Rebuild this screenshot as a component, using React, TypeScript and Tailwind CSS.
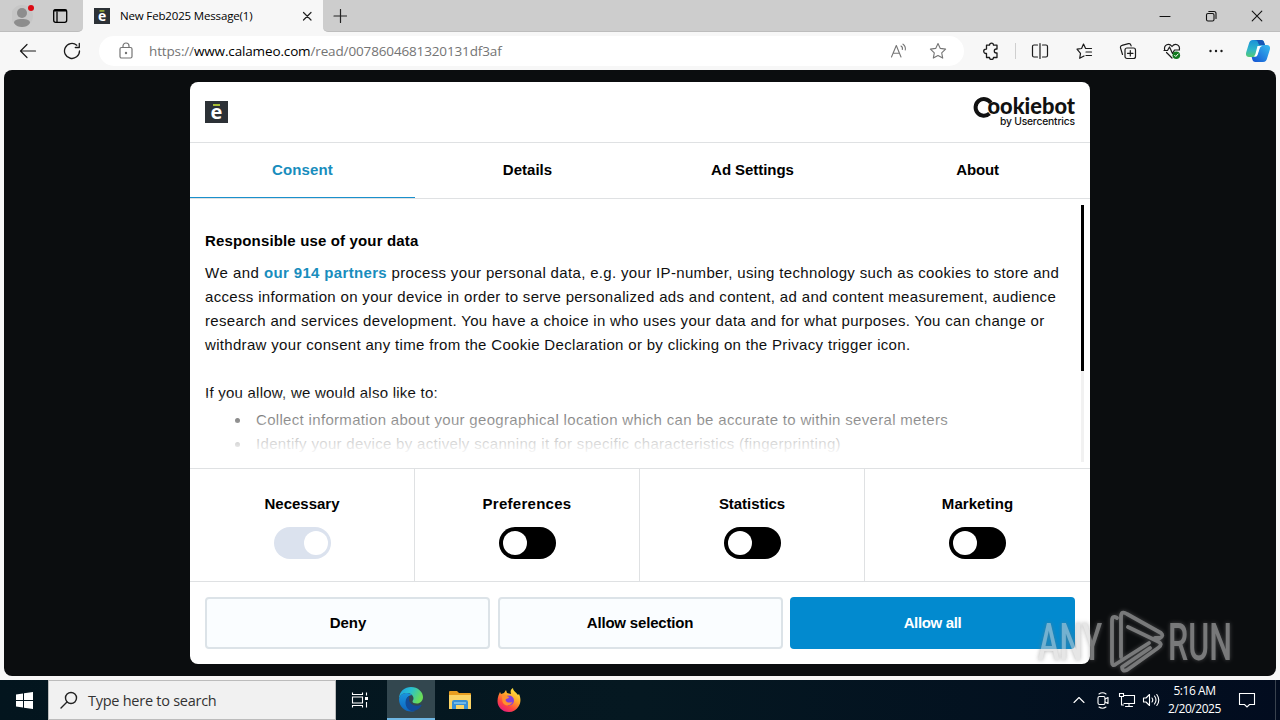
import type { ReactNode } from 'react'

const UI = "font-['Open_Sans','Noto_Sans',sans-serif]"

function Svg({ w, h, className = '', sw = 1.1, children }: { w: number; h: number; className?: string; sw?: number; children: ReactNode }) {
  return (
    <svg
      width={w}
      height={h}
      viewBox={`0 0 ${w} ${h}`}
      fill="none"
      stroke="currentColor"
      strokeWidth={sw}
      strokeLinecap="round"
      strokeLinejoin="round"
      className={`shrink-0 ${className}`}
    >
      {children}
    </svg>
  )
}

function CalameoMark({ w, h, className = '' }: { w: number; h: number; className?: string }) {
  return (
    <svg width={w} height={h} viewBox="0 0 23 22" preserveAspectRatio="none" className={`shrink-0 overflow-visible ${className}`}>
      <rect width="23" height="22" fill="#2c3136" />
      <rect x="8" y="3" width="7" height="2" fill="#a9bd35" />
      <text x="11.5" y="18.3" textAnchor="middle" fontSize="20" fontWeight="700" fontFamily="Open Sans" fill="#fff">
        e
      </text>
    </svg>
  )
}

function TabStrip() {
  return (
    <div className="flex h-8 shrink-0 bg-[#f7f7f7]">
      <div className="flex w-[83px] items-start rounded-br-[5px] border-b border-[#bdbdbd] bg-[#cdcdcd] pl-3">
        <Svg w={24} h={30} className="text-[#8d8d8d]">
          <circle cx="10" cy="16" r="11" fill="#c6c6c6" stroke="none" />
          <circle cx="10" cy="13" r="5" fill="#8d8d8d" stroke="none" />
          <path d="M2 23c0-3 3-4 8-4s8 1 8 4c-2 3-5 4-8 4s-6-1-8-4z" fill="#8d8d8d" stroke="none" />
          <circle cx="19" cy="8" r="3" fill="#dc0a14" stroke="none" />
        </Svg>
        <Svg w={16} h={30} className="ml-4 text-black" sw={1.3}>
          <rect x="1.7" y="9.7" width="13" height="12.6" rx="2" />
          <path d="M5 12v10" />
          <path d="M2.500 10.600h11.500" strokeWidth="2" />
        </Svg>
      </div>
      <div className="flex w-[240px] items-center pl-[11px] pr-[9px]">
        <CalameoMark w={16} h={16} />
        <span className={`${UI} ml-2.5 flex-1 whitespace-nowrap text-[11.5px] tracking-[-0.16px] text-black`}>New Feb2025 Message(1)</span>
        <Svg w={14} h={14} className="text-[#222]" sw={1.2}>
          <path d="M3.500 3.500l7.500 7.500M11 3.500l-7.500 7.500" />
        </Svg>
      </div>
      <div className="flex flex-1 items-center rounded-bl-[5px] border-b border-[#bdbdbd] bg-[#cdcdcd] pl-2.5">
        <Svg w={14} h={14} className="text-[#222]" sw={1.2}>
          <path d="M7.500 .5v13M1 7h13" />
        </Svg>
        <div className="ml-auto flex text-[#111]">
          <div className="flex w-[46px] justify-center">
            <Svg w={12} h={12}>
              <path d="M1 6.500h10" />
            </Svg>
          </div>
          <div className="flex w-[46px] justify-center">
            <Svg w={12} h={12}>
              <rect x="1.500" y="3.500" width="7.500" height="7.500" rx="1.500" />
              <path d="M3.800 1.500h5.200a2 2 0 0 1 2 2v5" />
            </Svg>
          </div>
          <div className="flex w-[46px] justify-center">
            <Svg w={12} h={12}>
              <path d="M1.200 1.200l9.600 9.600M10.800 1.200l-9.600 9.600" />
            </Svg>
          </div>
        </div>
      </div>
    </div>
  )
}

const starPath = 'M9 1.500l2.300 4.900 5.300.7-3.900 3.700 1 5.300L9 13.500l-4.700 2.600 1-5.300L1.400 7.100l5.300-.7z'

function Toolbar() {
  return (
    <div className="flex h-[38px] shrink-0 items-center bg-[#f7f7f7] pl-[19px] text-[#1b1b1b]">
      <Svg w={18} h={18} sw={1.2}>
        <path d="M16.500 9H1.500M8 2.500L1.500 9 8 15.500" />
      </Svg>
      <Svg w={18} h={18} className="ml-[26px]" sw={1.3}>
        <path d="M16.500 9A7.500 7.500 0 1 1 13.800 3.200M16.300 1.500v4h-4" />
      </Svg>
      <div className="ml-[18px] flex h-[30px] w-[865px] items-center rounded-full bg-white pl-[19px] pr-[17px] text-[#757575]">
        <Svg w={16} h={18} sw={1.2}>
          <rect x="2" y="5.500" width="12" height="10.500" rx="1.500" />
          <path d="M5 5.500V4a3 3 0 0 1 6 0v1.500" />
          <circle cx="8" cy="11" r=".6" fill="currentColor" />
        </Svg>
        <span className={`${UI} ml-[15px] flex-1 whitespace-nowrap pt-px text-[13.5px] tracking-[-0.14px] text-[#747474]`}>
          https://<span className="text-black">www.calameo.com</span>/read/0078604681320131df3af
        </span>
        <Svg w={18} h={18}>
          <path d="M1.500 15L6.300 3.500 11 15M3 11.200h6.500" />
          <path d="M11 4a3 3 0 0 1 1.300 3.500M13 2.200a6 6 0 0 1 2.300 5.800" />
        </Svg>
        <Svg w={18} h={18} className="ml-[21px]">
          <path d={starPath} />
        </Svg>
      </div>
      <Svg w={18} h={18} className="ml-[18px]" sw={1.3}>
        <path d="M4.500 3.200h3a2 2 0 0 1 4 0H15v3.800h-.7a2 2 0 0 0 0 4h.7v4.500h-3.500a2 2 0 0 1-4 0h-3V11.500h-.6a2.200 2.200 0 1 1 0-4.400h.6z" />
      </Svg>
      <div className="ml-[15px] h-4 w-px bg-[#cfcfcf]" />
      <Svg w={18} h={18} className="ml-[15px]" sw={1.2}>
        <path d="M6.500 3H3a1.500 1.500 0 0 0-1.500 1.500v9A1.500 1.500 0 0 0 3 15h3.500M11.500 3H15a1.500 1.500 0 0 1 1.500 1.500v9A1.500 1.500 0 0 1 15 15h-3.500M9 1.500v15" />
      </Svg>
      <Svg w={18} h={18} className="ml-[26px]" sw={1.2}>
        <path d="M9 14l-4.300 2.300.8-5L2 7.200l4.600-.7L8.500 2l2.100 4.500h5.900M11 10h5.500M11 13.500h5.500" />
      </Svg>
      <Svg w={18} h={18} className="ml-[26px]" sw={1.2}>
        <rect x="6" y="6" width="10.500" height="10.500" rx="2" />
        <path d="M11.300 8.500v5.500M8.500 11.300H14M3.500 12.500L1.500 5.800A2 2 0 0 1 3 3.400l6.500-1.700a2 2 0 0 1 2.400 1.400l.2.700" />
      </Svg>
      <Svg w={18} h={18} className="ml-[26px]" sw={1.2}>
        <path d="M1.700 8C.5 2.500 6 .5 9 4.500 12 .5 17.500 2.500 16.300 8M1 8.500h3.500L6.500 5l3 6.500 2-3.500h5M3.500 10.500L9 16" />
        <circle cx="13.300" cy="13.200" r="3.800" fill="#12791f" stroke="none" />
        <path d="M11.600 13.300l1.200 1.200 2.300-2.500" stroke="#fff" strokeWidth="1" />
      </Svg>
      <Svg w={18} h={18} className="ml-[26px]">
        <circle cx="3.500" cy="9" r="1.200" fill="currentColor" stroke="none" />
        <circle cx="9" cy="9" r="1.200" fill="currentColor" stroke="none" />
        <circle cx="14.500" cy="9" r="1.200" fill="currentColor" stroke="none" />
      </Svg>
      <svg width="24" height="24" viewBox="0 0 24 24" className="ml-[21px] shrink-0">
        <defs>
          <linearGradient id="cpA" x1="0" y1="0" x2="0" y2="1">
            <stop offset="0" stopColor="#1b91d8" />
            <stop offset=".55" stopColor="#2fb5ca" />
            <stop offset="1" stopColor="#55ca75" />
          </linearGradient>
          <linearGradient id="cpB" x1="1" y1="0" x2="0" y2="1">
            <stop offset="0" stopColor="#35bdf0" />
            <stop offset="1" stopColor="#1450d2" />
          </linearGradient>
        </defs>
        <path d="M7 1h8c2 0 2.800 1 3.300 3L19 6h-2c-2 0-3 1-3.600 3l-2 6c-.7 2-1.500 3-3.400 3H3c-3 0-3.500-2.500-2.700-5l2.500-8C3.500 2.500 4.500 1 7 1z" fill="url(#cpA)" />
        <path d="M8 1h7c2 0 2.800 1 3.300 3L19 6h-4c-2 0-2.500-1-3-2.600C11.500 1.800 10 1 8 1z" fill="#1656b5" />
        <path d="M17 23H9.500c-2 0-2.800-1-3.300-3L5.700 18H8c2 0 2.800-1 3.400-3l2-6c.7-2 1.600-3 3.600-3h4c3 0 3.500 2.500 2.700 5l-2.500 8c-.7 2.500-1.700 4-4.200 4z" fill="url(#cpB)" />
        <path d="M11.500 7h4.500c-1.300.5-1.900 1.300-2.400 2.800l-1.800 5.400c-.4 1.200-.9 1.800-1.700 2.300H7.500c1-.5 1.500-1.400 2-2.800z" fill="#fff" />
      </svg>
    </div>
  )
}

function Toggle({ locked = false }: { locked?: boolean }) {
  return (
    <div className={`flex h-8 w-[57px] items-center rounded-full px-1 ${locked ? 'justify-end bg-[#dbe2ee] pr-[3px]' : 'bg-black'}`}>
      <div className="size-6 rounded-full bg-white" />
    </div>
  )
}

const tabs = [
  { label: 'Consent', spacing: 'tracking-[0.15px]' },
  { label: 'Details', spacing: 'tracking-[0.02px]' },
  { label: 'Ad Settings', spacing: 'tracking-[-0.05px]' },
  { label: 'About', spacing: 'tracking-[-0.15px]' },
]

const categories = [
  { label: 'Necessary', spacing: 'tracking-normal' },
  { label: 'Preferences', spacing: 'tracking-[0.28px]' },
  { label: 'Statistics', spacing: 'tracking-[-0.05px]' },
  { label: 'Marketing', spacing: 'tracking-[0.05px]' },
]

const purposes = [
  'Collect information about your geographical location which can be accurate to within several meters',
  'Identify your device by actively scanning it for specific characteristics (fingerprinting)',
]

function ConsentDialog() {
  return (
    <div className="flex h-[582px] w-[900px] flex-col overflow-hidden rounded-lg bg-white font-['Liberation_Sans',Arial,sans-serif] text-[15px] text-[#101010]">
      <div className="flex h-[61px] shrink-0 items-center justify-between border-b border-[#dfe1e3] px-[15px]">
        <CalameoMark w={23} h={22} />
        <svg width="104" height="36" viewBox="0 0 104 36" className="-mr-0.5 overflow-visible">
          <path d="M17.800 8.800A8.300 8.300 0 1 0 16.500 19.500" fill="none" stroke="#111" strokeWidth="4" />
          <text x="14.500" y="20.300" fontFamily="Lato" fontWeight="900" fontSize="22.500" textLength="87.500" lengthAdjust="spacingAndGlyphs" fill="#111">
            ookiebot
          </text>
          <text x="27" y="31.300" fontFamily="Inter" fontWeight="500" fontSize="10.300" textLength="75" fill="#111">
            by Usercentrics
          </text>
        </svg>
      </div>

      <div className="grid h-[56px] shrink-0 grid-cols-4 border-b border-[#dfe1e3] font-bold text-black">
        {tabs.map((tab, i) => (
          <div key={tab.label} className={`flex flex-col ${tab.spacing} ${i === 0 ? 'text-[#188dbd]' : ''}`}>
            <span className="flex flex-1 items-center justify-center">{tab.label}</span>
            <span className={`h-px ${i === 0 ? 'bg-[#1a90cc]' : ''}`} />
          </div>
        ))}
      </div>

      <div className="relative flex h-[269px] shrink-0 justify-between pl-[15px]">
        <div className="whitespace-nowrap pt-[30px] leading-6">
          <h2 className="mb-2 font-bold tracking-[0.15px] text-black">Responsible use of your data</h2>
          <p className="tracking-[0.335px]">
            <span className="tracking-[0.5px]">We and </span>
            <strong className="text-[#188dbd]">our 914 partners</strong> process your personal data, e.g. your IP-number, using technology such as cookies to store and
          </p>
          <p className="tracking-[0.33px]">access information on your device in order to serve personalized ads and content, ad and content measurement, audience</p>
          <p className="tracking-[0.325px]">research and services development. You have a choice in who uses your data and for what purposes. You can change or</p>
          <p className="tracking-[0.32px]">withdraw your consent any time from the Cookie Declaration or by clicking on the Privacy trigger icon.</p>
          <p className="mt-6 tracking-[0.24px]">If you allow, we would also like to:</p>
          <ul className="mt-[3px] pl-[30px] tracking-[0.32px]">
            {purposes.map((text) => (
              <li key={text} className="flex items-center gap-4">
                <span className="size-[5px] rounded-full bg-[#101010]" />
                {text}
              </li>
            ))}
          </ul>
        </div>
        <div className="absolute bottom-0 left-0 h-[72px] w-[880px] bg-linear-to-t from-white from-18% to-white/20" />
        <div className="mr-1.5 mt-1.5 h-[257px] w-[3px] bg-[#f1f1f1]">
          <div className="h-[166px] bg-black" />
        </div>
      </div>

      <div className="grid h-[114px] shrink-0 grid-cols-4 border-y border-[#dfe1e3]">
        {categories.map((cat, i) => (
          <div key={cat.label} className={`flex flex-col items-center pt-[23px] ${i < 3 ? 'border-r border-[#dfe1e3]' : ''}`}>
            <span className={`mb-[11px] font-bold leading-6 text-black ${cat.spacing}`}>{cat.label}</span>
            <Toggle locked={i === 0} />
          </div>
        ))}
      </div>

      <div className="flex flex-1 justify-between px-[15px] pb-[15px] pt-[15px] font-bold text-black">
        <button className="w-[285px] rounded border-2 border-[#dce3e8] bg-[#fafdff] pl-px">Deny</button>
        <button className="w-[285px] rounded border-2 border-[#dce3e8] bg-[#fafdff] tracking-[-0.18px]">Allow selection</button>
        <button className="w-[285px] rounded bg-[#028acf] tracking-[-0.35px] text-white">Allow all</button>
      </div>
    </div>
  )
}

function Watermark() {
  return (
    <svg width="210" height="70" viewBox="0 0 210 70" className="absolute left-[1030px] top-[606px] overflow-visible opacity-55 drop-shadow-[0_0_2px_#777]">
      <g fill="#d2d2d2" fontFamily="Roboto" fontSize="52" fontWeight="500">
        <text x="8" y="53.500" textLength="64" lengthAdjust="spacingAndGlyphs">
          ANY
        </text>
        <text x="138" y="53.500" textLength="64" lengthAdjust="spacingAndGlyphs">
          RUN
        </text>
      </g>
      <g fill="none" stroke="#d2d2d2" strokeWidth="3.800" strokeLinejoin="round" strokeLinecap="round">
        <path d="M87 12q-5-3-5 3V56q0 5 4 2L119 37" />
        <path d="M91 51V11q0-7 6-3l34 19q3 3-1 5l-5 0" />
        <path d="M98 21l29 14q7 3 1 7L97 64q-5 2-5-3l28-19" />
      </g>
    </svg>
  )
}

function Taskbar() {
  return (
    <div className="flex h-10 shrink-0 items-center bg-linear-to-r from-[#03151e] via-[#051821] to-[#020c1f] text-white">
      <div className="flex w-12 justify-center">
        <svg width="17" height="17" viewBox="0 0 17 17" fill="#fff">
          <path d="M0 2.400L7 1.400V8H0zM8 1.300L17 0v8H8zM0 9h7v6.600L0 14.600zM8 9h9v8l-9-1.300z" />
        </svg>
      </div>
      <div className="flex h-10 w-72 items-center border border-[#bcbcbc] bg-[#f1f1f1] pl-[11px] text-[#222]">
        <Svg w={18} h={18} sw={1.4}>
          <circle cx="11" cy="7" r="5.500" />
          <path d="M7 11l-6 6" />
        </Svg>
        <span className={`${UI} ml-2.5 whitespace-nowrap pt-0.5 text-[14.500px] tracking-[-0.26px] text-[#333]`}>Type here to search</span>
      </div>
      <div className="flex w-[51px] justify-center pr-1">
        <Svg w={18} h={18}>
          <path d="M1.500 1.500v2h10v-2M1.500 16.500v-2h10v2M1.500 6h10v6h-10zM15.500 1.500v3M15.500 11v5.500" strokeLinejoin="miter" strokeLinecap="butt" />
          <rect x="14" y="6" width="3" height="3" fill="#fff" stroke="none" />
        </Svg>
      </div>
      <div className="flex h-10 w-12 items-center justify-center border-b-2 border-[#6fb7e3] bg-[#33474f]">
        <svg width="24" height="25" viewBox="0 0 24 25">
          <defs>
            <linearGradient id="edA" x1="0" y1="0" x2="1" y2=".4">
              <stop offset="0" stopColor="#1d9de5" />
              <stop offset=".5" stopColor="#29c0cf" />
              <stop offset="1" stopColor="#69dc58" />
            </linearGradient>
            <linearGradient id="edB" x1="0" y1="0" x2="0" y2="1">
              <stop offset="0" stopColor="#1a95dd" />
              <stop offset="1" stopColor="#0d65c0" />
            </linearGradient>
          </defs>
          <path d="M0 12C0 4 6 0 12 0c7 0 12 5 12 10 0 4-3 6.500-6 6.500s-4.500-1-4.500-2 1-1.500 1-3C14.500 8 11 6 8 6c-4 0-7 2-8 6z" fill="url(#edA)" />
          <path d="M0 12c1-4 4-6 8-6 2 0 4 1 5 2-3 0-6 3-6 7 0 5 4 9 9 9-8 2.500-16-3-16-12z" fill="url(#edB)" />
          <path d="M10 9c-2 1-3.500 3.500-3.500 6.500C6.500 21 11 25 15 24c4-1 6-3 7.500-5.500.3-.7-.2-1-.7-.7C16 20.500 10 17 10 12z" fill="#124b99" />
        </svg>
      </div>
      <div className="flex w-[49px] justify-center">
        <svg width="22" height="20" viewBox="0 0 22 20">
          <path d="M0 2q0-1 1-1h7l2 2h11q1 0 1 1v4H0z" fill="#e89e20" />
          <path d="M0 5h22v14H0z" fill="#fbd466" />
          <path d="M3 19v-7q0-2 2-2h12q2 0 2 2v7h-4v-4H7v4z" fill="#3990d5" />
          <path d="M5 12h12v2H5z" fill="#70b9e9" />
        </svg>
      </div>
      <div className="flex w-[49px] justify-center">
        <svg width="24" height="24" viewBox="0 0 24 24">
          <defs>
            <linearGradient id="ffA" x1=".8" y1="0" x2=".2" y2="1">
              <stop offset="0" stopColor="#fff044" />
              <stop offset=".4" stopColor="#ffa329" />
              <stop offset=".7" stopColor="#ff483d" />
              <stop offset="1" stopColor="#e31587" />
            </linearGradient>
          </defs>
          <path d="M3 4l1 2 3-1 2-3 1 3 4 1c-1-3 0-5 2-6 0 3 3 4 5 7l1-1c2 4 2 9-.5 12.500C19.500 22 16 24 12 24 5 24 .5 19 .5 13 .5 9 2 6 3 4z" fill="url(#ffA)" />
          <circle cx="12" cy="12.500" r="5" fill="#8340dc" />
          <path d="M5 8c3-2 5 0 7 1 0 2-3 1-3.500 3 1 3 4 3 7 2-2 4-8 5-10 0z" fill="#ff912d" />
        </svg>
      </div>

      <div className="ml-auto flex h-full items-center">
        <Svg w={18} h={18} className="mr-1.5">
          <path d="M4 11.500L9 6.500l5 5" />
        </Svg>
        <Svg w={18} h={18} className="mr-1.5">
          <rect x="4" y="5.500" width="7" height="8" rx="1.500" />
          <path d="M11 8l3-1.500v6L11 11M5 3q3.500-2.500 7 0M5 16q3.500 2.500 7 0" />
        </Svg>
        <Svg w={18} h={18} className="mr-1.5">
          <path d="M6 4.500h10.500v8H6M11 12.500v3M7.500 15.500h7M1.500 2.500h4v3h-4zM3.500 5.500v8.500h2" strokeLinejoin="miter" />
        </Svg>
        <Svg w={18} h={18}>
          <path d="M1.500 7h2.500l3.500-3.500v11L4 11H1.500zM10 7q1.500 2 0 4M12.500 5q3 4 0 8M14.800 3.500q4 5.500 0 11" />
        </Svg>
        <div className={`${UI} w-[69px] whitespace-nowrap text-center text-[12px] leading-[18px] tracking-[-0.45px]`}>
          <div>5:16 AM</div>
          <div>2/20/2025</div>
        </div>
        <Svg w={18} h={18} className="ml-[9px] mr-[19px]">
          <path d="M1.500 2.500h15v11h-5L9 16l-2.500-2.500h-5z" strokeLinejoin="miter" />
        </Svg>
        <div className="mr-1 h-full w-px bg-[#39424e]" />
      </div>
    </div>
  )
}

export default function App() {
  return (
    <div className="relative flex h-[720px] w-[1280px] flex-col overflow-hidden bg-[#f7f7f7]">
      <TabStrip />
      <Toolbar />
      <main className="mx-1 mb-1 flex flex-1 justify-center rounded-lg bg-[#0b0d0f] pt-3">
        <ConsentDialog />
      </main>
      <Taskbar />
      <Watermark />
    </div>
  )
}
